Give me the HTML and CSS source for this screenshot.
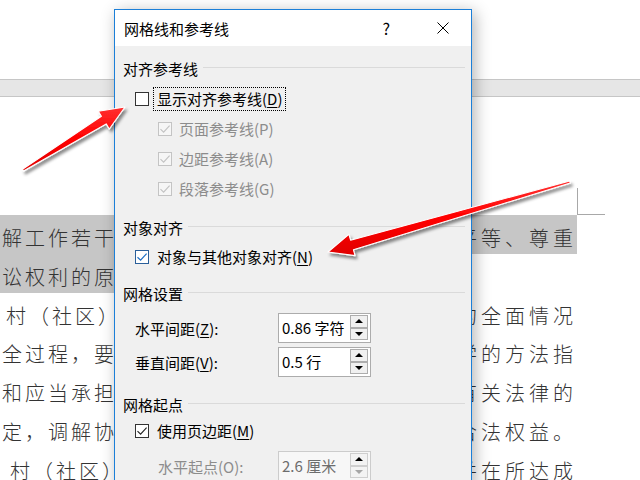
FILE: index.html
```html
<!DOCTYPE html>
<html lang="zh-CN">
<head>
<meta charset="utf-8">
<title>网格线和参考线</title>
<link rel="stylesheet" href="styles.css">
</head>
<body>
<div class="screen">
  <div class="doc">
    <div class="doc-top"></div>
    <div class="ruler"></div>
    <div class="sheet">
      <div class="margin-mark"></div>
      <div class="text">
        <div class="line sel"><span class="l">解工作若干</span><span class="r">平等、尊重</span></div>
        <div class="line sel tail"><span class="l">讼权利的原</span></div>
        <div class="line para"><span class="l">村（社区）</span><span class="r">的全面情况</span></div>
        <div class="line"><span class="l">全过程，要</span><span class="r">学的方法指</span></div>
        <div class="line"><span class="l">和应当承担</span><span class="r">有关法律的</span></div>
        <div class="line"><span class="l">定，调解协</span><span class="r">合法权益。</span></div>
        <div class="line para2"><span class="l">村（社区）</span><span class="r">并在所达成</span></div>
      </div>
    </div>
  </div>

  <div class="dialog">
    <div class="titlebar">
      <span class="title">网格线和参考线</span>
      <span class="help">?</span>
      <svg class="close" width="12" height="12" viewBox="0 0 12 12"><path d="M0.5 0.5L11.5 11.5M11.5 0.5L0.5 11.5" stroke="#000" stroke-width="1" fill="none"/></svg>
    </div>
    <div class="body">
      <div class="group-head h1">对齐参考线</div>
      <div class="check">
        <span class="box"></span>
        <span class="label focus">显示对齐参考线(<u>D</u>)</span>
      </div>
      <div class="check sub disabled">
        <span class="box"><svg viewBox="0 0 14 14"><path d="M2.5 7.2L5.6 10.2L11.6 3.6" fill="none" stroke="#c2c2c2" stroke-width="1.1"/></svg></span>
        <span class="label">页面参考线(P)</span>
      </div>
      <div class="check sub disabled">
        <span class="box"><svg viewBox="0 0 14 14"><path d="M2.5 7.2L5.6 10.2L11.6 3.6" fill="none" stroke="#c2c2c2" stroke-width="1.1"/></svg></span>
        <span class="label">边距参考线(A)</span>
      </div>
      <div class="check sub disabled">
        <span class="box"><svg viewBox="0 0 14 14"><path d="M2.5 7.2L5.6 10.2L11.6 3.6" fill="none" stroke="#c2c2c2" stroke-width="1.1"/></svg></span>
        <span class="label">段落参考线(G)</span>
      </div>

      <div class="group-head h2">对象对齐</div>
      <div class="check">
        <span class="box hot"><svg viewBox="0 0 14 14"><path d="M2.5 7.2L5.6 10.2L11.6 3.6" fill="none" stroke="#1f6fc5" stroke-width="1.2"/></svg></span>
        <span class="label">对象与其他对象对齐(<u>N</u>)</span>
      </div>

      <div class="group-head h3">网格设置</div>
      <div class="field f1">
        <span class="flabel">水平间距(<u>Z</u>):</span>
        <div class="spin">
          <span class="value">0.86 字符</span>
          <span class="btns"><span class="btn up"></span><span class="btn down"></span></span>
        </div>
      </div>
      <div class="field f2">
        <span class="flabel">垂直间距(<u>V</u>):</span>
        <div class="spin">
          <span class="value">0.5 行</span>
          <span class="btns"><span class="btn up"></span><span class="btn down"></span></span>
        </div>
      </div>

      <div class="group-head h4">网格起点</div>
      <div class="check c-margin">
        <span class="box"><svg viewBox="0 0 14 14"><path d="M2.5 7.2L5.6 10.2L11.6 3.6" fill="none" stroke="#222" stroke-width="1.1"/></svg></span>
        <span class="label">使用页边距(<u>M</u>)</span>
      </div>
      <div class="field f3 disabled">
        <span class="flabel">水平起点(O):</span>
        <div class="spin">
          <span class="value">2.6 厘米</span>
          <span class="btns"><span class="btn up"></span><span class="btn down"></span></span>
        </div>
      </div>
    </div>
  </div>

  <svg class="marks" width="640" height="480" viewBox="0 0 640 480">
    <defs>
      <filter id="drop" x="-10%" y="-20%" width="130%" height="160%">
        <feDropShadow dx="2" dy="3" stdDeviation="1.8" flood-color="#000" flood-opacity="0.45"/>
      </filter>
      <linearGradient id="redfill" x1="0" y1="0" x2="0" y2="1">
        <stop offset="0" stop-color="#ff3030"/>
        <stop offset="0.5" stop-color="#ff0000"/>
        <stop offset="1" stop-color="#e00000"/>
      </linearGradient>
    </defs>
    <polygon filter="url(#drop)" fill="url(#redfill)" stroke="#fff" stroke-width="1.1" stroke-linejoin="round"
      points="22.5,169.2 101.4,116.3 98.3,111.2 125,107 109.3,129 106.2,123.9 23.5,170.9"/>
    <polygon filter="url(#drop)" fill="url(#redfill)" stroke="#fff" stroke-width="1.1" stroke-linejoin="round"
      points="569.7,181 350.6,240.2 348.9,234.4 328,252 355.1,255.6 353.4,249.8 570.3,183"/>
  </svg>
</div>
</body>
</html>
```

FILE: styles.css
```css
* { box-sizing: border-box; }

html, body {
  margin: 0;
  padding: 0;
}

body {
  width: 640px;
  height: 480px;
  overflow: hidden;
  background: #fff;
  font-family: "Noto Sans CJK SC", "Microsoft YaHei", sans-serif;
}

.screen {
  position: relative;
  width: 640px;
  height: 480px;
  overflow: hidden;
}

/* ---------- document behind the dialog ---------- */
.doc-top { height: 79px; background: #fff; }

.ruler {
  height: 18px;
  background: #e6e6e6;
  border-top: 1px solid #c6c6c6;
  border-bottom: 1px solid #c6c6c6;
}

.sheet { padding-top: 91px; }

.margin-mark {
  margin-left: 577px;
  width: 28px;
  height: 27px;
  border-left: 1px solid #a8a8a8;
  border-bottom: 1px solid #a8a8a8;
}

.text {
  width: 577px;
  font-size: 20px;
  font-weight: 300;
  color: #333;
}

.line {
  display: flex;
  justify-content: space-between;
  height: 38.8px;
  line-height: 46px;
  padding-left: 2px;
  white-space: nowrap;
}

.line .l { letter-spacing: 3px; }
.line .r { letter-spacing: 4px; }

.line.sel { background: #c6c6c6; }
.line.tail { width: 200px; }
.line.para { padding-left: 6px; }
.line.para2 { padding-left: 10px; }

/* ---------- dialog ---------- */
.dialog {
  position: absolute;
  left: 114px;
  top: 9px;
  width: 358px;
  height: 480px;
  border: 1px solid #1b7fd8;
  background: #f0f0f0;
  box-shadow: 3px 3px 15px rgba(0, 0, 0, 0.3);
  font-size: 15px;
  color: #000;
}

.titlebar {
  height: 36px;
  background: #fff;
  display: flex;
  align-items: center;
  padding: 0 22px 0 9px;
}

.title { flex: 1; }
.help { margin-right: 47px; font-size: 16px; }
.close { display: block; }

.body { padding: 6px 6px 0 8px; }

.group-head {
  display: flex;
  align-items: center;
  gap: 5px;
  height: 30px;
}

.group-head::after {
  content: "";
  flex: 1;
  height: 1px;
  margin-top: -2px;
  background: #dadada;
}

.group-head.h1 { height: 32px; }
.group-head.h2 { margin-top: 8px; }
.group-head.h3 { margin-top: 6px; }
.group-head.h4 { margin-top: 14px; height: 26px; }

.check {
  display: flex;
  align-items: center;
  height: 30px;
  padding-left: 12px;
}

.check.sub { padding-left: 35px; }
.check.c-margin { height: 28px; }

.box {
  width: 14px;
  height: 14px;
  border: 1px solid #333;
  background: #fff;
  flex: none;
  position: relative;
}

.box svg {
  position: absolute;
  left: -1px;
  top: -1px;
  width: 14px;
  height: 14px;
}

.box.hot { border-color: #2a5f9a; }

.check .label { margin-left: 8px; line-height: 20px; }
.check.sub .label { margin-left: 7px; }

.label.focus {
  margin-left: 5px;
  padding: 1px 3px 1px 3px;
  outline: 1px dotted #000;
}

.disabled .box { border-color: #c4c4c4; background: #f6f6f6; }
.disabled .label,
.disabled .flabel { color: #8c8c8c; }

u { text-decoration: underline; text-underline-offset: 2px; }

/* spin fields */
.field {
  display: grid;
  grid-template-columns: 143px 93px;
  align-items: center;
  height: 30px;
  padding-left: 12px;
}

.field.f1 { margin-top: 5px; }
.field.f2 { margin-top: 4px; }
.field.f3 { margin-top: 6px; }
.field.f3 .flabel { padding-left: 23px; }

.spin {
  display: flex;
  height: 30px;
  border: 1px solid #acacac;
  background: #fff;
  padding: 1px 2px 1px 2px;
}

.value {
  flex: 1;
  padding-left: 1px;
  line-height: 24px;
  align-self: center;
  white-space: nowrap;
}

.btns {
  display: flex;
  flex-direction: column;
  width: 18px;
  flex: none;
}

.btn {
  height: 12.5px;
  border: 1px solid #adadad;
  background: #f0f0f0;
  display: flex;
  align-items: center;
  justify-content: center;
}

.btn.up::before {
  content: "";
  border-left: 4px solid transparent;
  border-right: 4px solid transparent;
  border-bottom: 4px solid #000;
}

.btn.down::before {
  content: "";
  border-left: 4px solid transparent;
  border-right: 4px solid transparent;
  border-top: 4px solid #000;
}

.disabled .spin { border-color: #cccccc; background: #f7f7f7; }
.disabled .value { color: #6d6d6d; }
.disabled .btn { border-color: #cfcfcf; background: #f3f3f3; }
.disabled .btn.down::before { border-top-color: #a6a6a6; }

/* annotation arrows over the window */
.marks {
  position: absolute;
  left: 0;
  top: 0;
  pointer-events: none;
}
```
